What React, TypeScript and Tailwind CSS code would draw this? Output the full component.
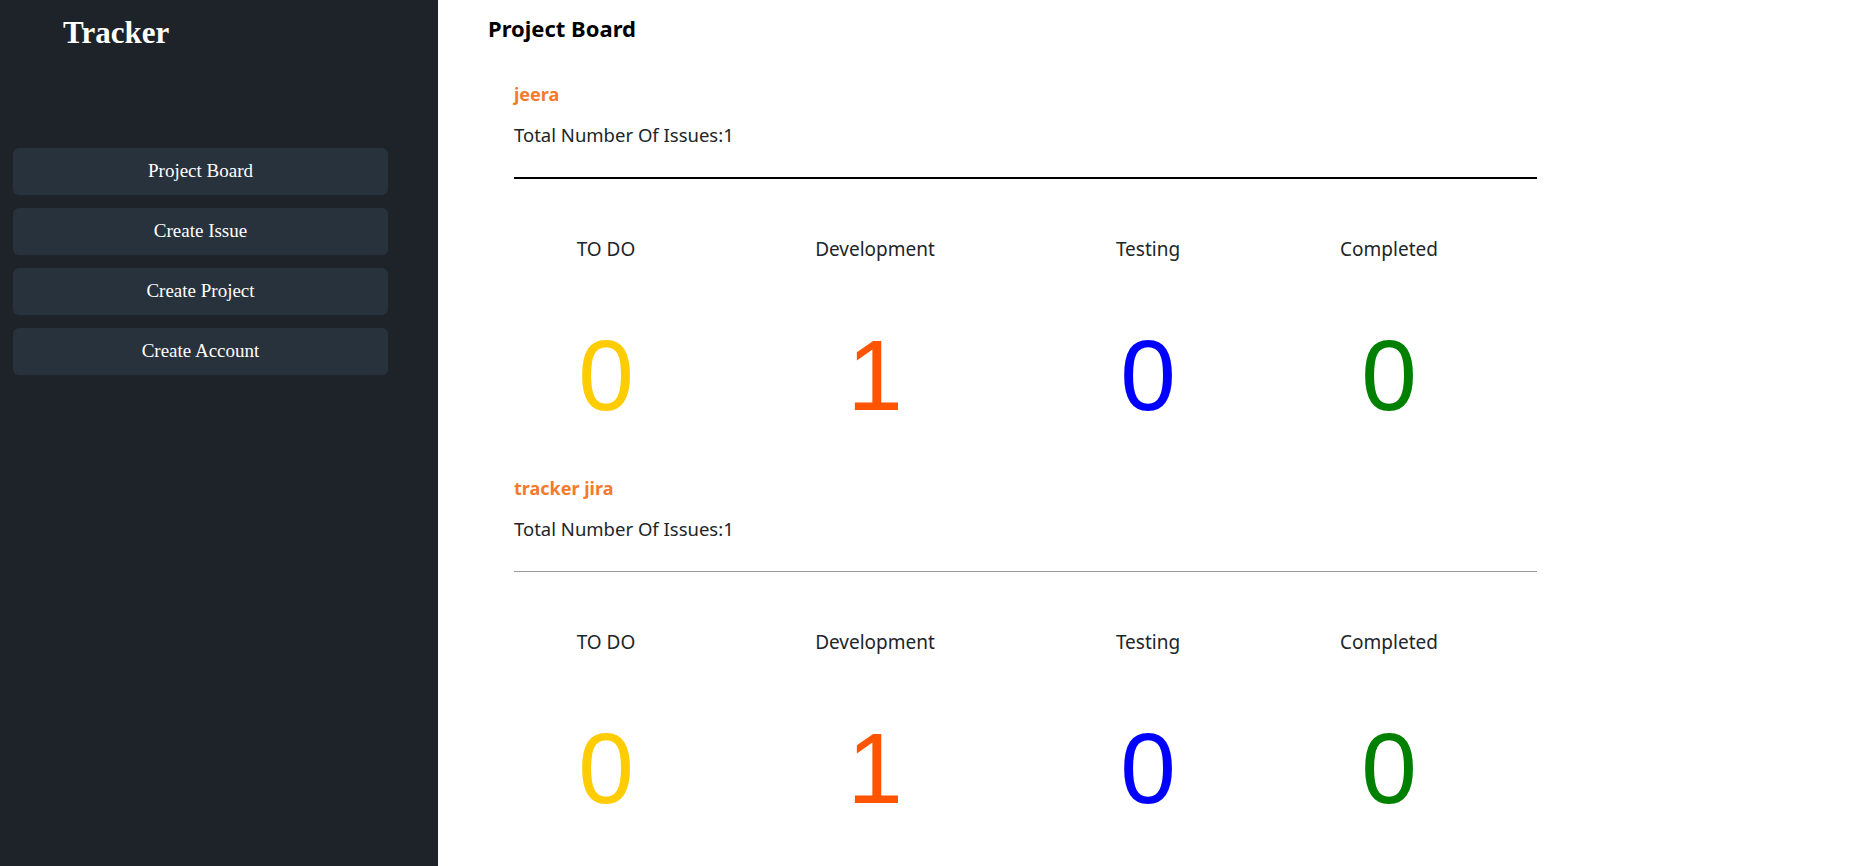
import React from "react";

const menu = ["Project Board", "Create Issue", "Create Project", "Create Account"];

const projects = [
  { name: "jeera", total: 1, counts: [0, 1, 0, 0], line: "border-t-2 border-black" },
  { name: "tracker jira", total: 1, counts: [0, 1, 0, 0], line: "border-t border-[#9a9a9a]" },
];

const columns = [
  { label: "TO DO", color: "text-[#ffcc00]" },
  { label: "Development", color: "text-[#ff5500]" },
  { label: "Testing", color: "text-[#0000ff]" },
  { label: "Completed", color: "text-[#008000]" },
];

function Sidebar() {
  return (
    <aside className="flex h-full w-[438px] shrink-0 flex-col bg-[#1e232a] font-['Liberation_Serif',serif] text-white">
      <h1 className="mt-[13px] pl-[63px] text-[31px] font-bold leading-[40px]">Tracker</h1>
      <nav className="mt-[95px] flex flex-col gap-[13px] pl-[13px]">
        {menu.map((item) => (
          <button
            key={item}
            className="flex h-[47px] w-[375px] items-center justify-center rounded-md bg-[#28323c] text-[19px] text-white"
          >
            {item}
          </button>
        ))}
      </nav>
    </aside>
  );
}

function ProjectSection({ project }: { project: (typeof projects)[number] }) {
  return (
    <section className="w-[1023px]">
      <h3 className="text-[18px] font-bold leading-[24px] text-[#f37b2c]">{project.name}</h3>
      <p className="mt-[17px] text-[18.5px] leading-[24px] text-[#212529]">
        Total Number Of Issues:{project.total}
      </p>
      <div className={`mt-[30px] ${project.line}`} />

      <div className="grid grid-cols-[184px_354px_192px_290px]">
        {columns.map((col) => (
          <div key={col.label} className="mt-[58px] text-center text-[19px] leading-[24px] text-[#212529]">
            {col.label}
          </div>
        ))}
        {columns.map((col, i) => (
          <div
            key={col.label + "-count"}
            className={`mt-[64px] text-center font-['Liberation_Sans',Arial,sans-serif] text-[100px] leading-[100px] ${col.color}`}
          >
            {project.counts[i]}
          </div>
        ))}
      </div>
    </section>
  );
}

export default function App() {
  return (
    <div className="flex h-screen overflow-hidden bg-white">
      <Sidebar />
      <main className="flex-1 pl-[50px] pt-[13px] font-['Noto_Sans',sans-serif]">
        <h2 className="text-[22px] font-bold leading-[30px] text-black">Project Board</h2>
        <div className="mt-[39px] flex flex-col gap-[51px] pl-[26px]">
          {projects.map((p) => (
            <ProjectSection key={p.name} project={p} />
          ))}
        </div>
      </main>
    </div>
  );
}
